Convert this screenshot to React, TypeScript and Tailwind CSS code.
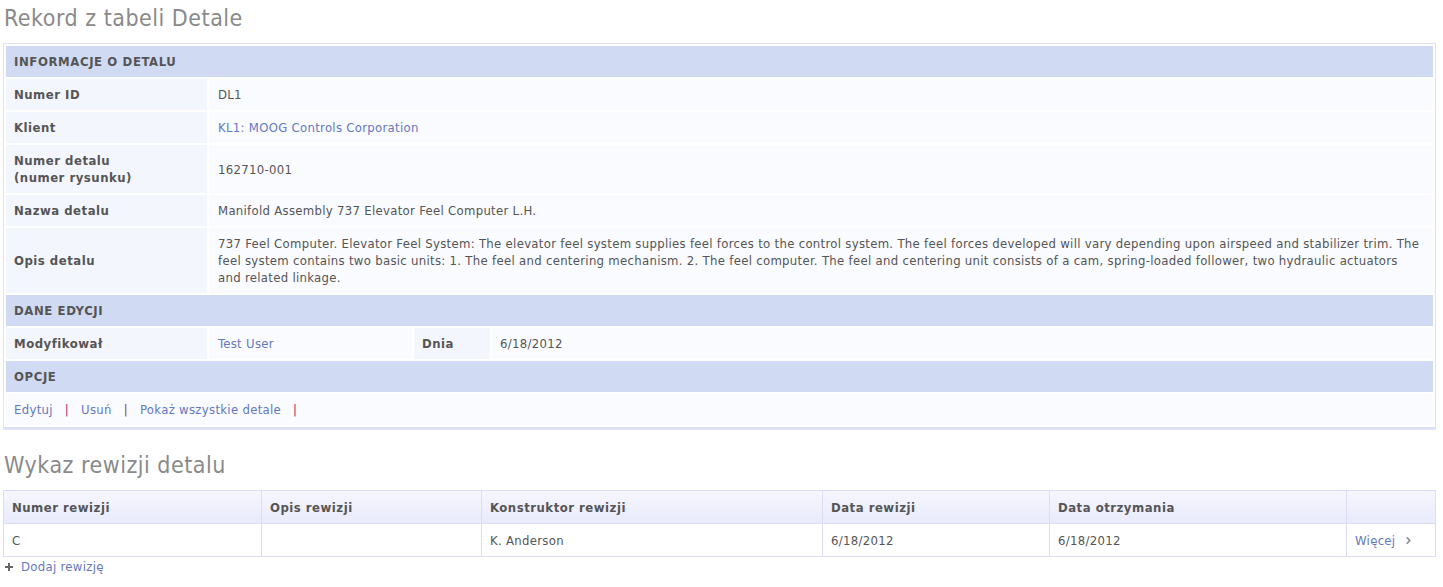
import { ChevronRight } from 'lucide-react';

const font = { fontFamily: '"DejaVu Sans Condensed", "DejaVu Sans", Tahoma, sans-serif' };

function Section({ title }: { title: string }) {
  return (
    <tr>
      <td
        colSpan={4}
        className="h-[31px] bg-[#d0dbf3] px-2 py-[7px] font-bold uppercase tracking-[0.6px] text-[#555]"
      >
        {title}
      </td>
    </tr>
  );
}

function Field({ label, children }: { label: React.ReactNode; children: React.ReactNode }) {
  return (
    <tr>
      <td className="w-[201px] bg-[#f4f6fd] px-2 py-[7px] align-middle font-bold tracking-[0.5px] text-[#555]">
        {label}
      </td>
      <td colSpan={3} className="bg-[#fafbff] py-[7px] pl-[9px] pr-[10px] align-middle text-[#555]">
        {children}
      </td>
    </tr>
  );
}

const link = 'text-[#6478bd] hover:underline cursor-pointer';
const pipe = 'mx-[12px] text-[#a0306a]';
const th = 'border border-[#dcdcf5] px-2 font-bold tracking-[0.5px]';
const td = 'border border-[#dcdcf5] px-2';

export default function App() {
  const revisions = [
    { num: 'C', opis: '', konstruktor: 'K. Anderson', data: '6/18/2012', otrzymania: '6/18/2012' },
  ];

  return (
    <div
      className="min-h-screen bg-white pl-[3px] pr-[7px] text-[13px] leading-[17px] tracking-[0.3px] text-[#555]"
      style={font}
    >
      <h1 className="pl-px pt-[4px] text-[23px] leading-[28px] tracking-[0.5px] text-[#8a8a8a]">
        Rekord z tabeli Detale
      </h1>

      <div className="mt-[11px] border border-b-[3px] border-[#dfe1f5] bg-white">
        <table className="w-full border-separate border-spacing-[2px]">
          <tbody>
            <Section title="Informacje o detalu" />
            <Field label="Numer ID">DL1</Field>
            <Field label="Klient">
              <span className={link}>KL1: MOOG Controls Corporation</span>
            </Field>
            <Field label={<>Numer detalu<br />(numer rysunku)</>}>162710-001</Field>
            <Field label="Nazwa detalu">Manifold Assembly 737 Elevator Feel Computer L.H.</Field>
            <Field label="Opis detalu">
              737 Feel Computer. Elevator Feel System: The elevator feel system supplies feel forces to the control
              system. The feel forces developed will vary depending upon airspeed and stabilizer trim. The feel system
              contains two basic units: 1. The feel and centering mechanism. 2. The feel computer. The feel and
              centering unit consists of a cam, spring-loaded follower, two hydraulic actuators and related linkage.
            </Field>
            <Section title="Dane edycji" />
            <tr>
              <td className="w-[201px] bg-[#f4f6fd] px-2 py-[7px] font-bold tracking-[0.5px]">Modyfikował</td>
              <td className="w-[203px] bg-[#fafbff] py-[7px] pl-[9px]">
                <span className={link}>Test User</span>
              </td>
              <td className="w-[76px] bg-[#f4f6fd] px-2 py-[7px] font-bold tracking-[0.5px]">Dnia</td>
              <td className="bg-[#fafbff] py-[7px] pl-[8px]">6/18/2012</td>
            </tr>
            <Section title="Opcje" />
            <tr>
              <td colSpan={4} className="bg-[#fafbff] px-2 py-[7px]">
                <span className={link}>Edytuj</span>
                <span className={pipe}>|</span>
                <span className={link}>Usuń</span>
                <span className={pipe}>|</span>
                <span className={link}>Pokaż wszystkie detale</span>
                <span className={pipe}>|</span>
              </td>
            </tr>
          </tbody>
        </table>
      </div>

      <h2 className="pl-px pt-[21px] text-[23px] leading-[28px] tracking-[0.5px] text-[#8a8a8a]">
        Wykaz rewizji detalu
      </h2>

      <table className="mt-[11px] w-full border-collapse border border-[#dcdcf5]">
        <thead>
          <tr className="bg-gradient-to-b from-[#f6f6fe] to-[#e9eafb] text-left">
            <th className={`h-[33px] w-[258px] ${th}`}>Numer rewizji</th>
            <th className={`w-[220px] ${th}`}>Opis rewizji</th>
            <th className={`w-[341px] ${th}`}>Konstruktor rewizji</th>
            <th className={`w-[227px] ${th}`}>Data rewizji</th>
            <th className={`w-[297px] ${th}`}>Data otrzymania</th>
            <th className={th}></th>
          </tr>
        </thead>
        <tbody>
          {revisions.map((r) => (
            <tr key={r.num} className="bg-white">
              <td className={`h-[33px] ${td}`}>{r.num}</td>
              <td className={td}>{r.opis}</td>
              <td className={td}>{r.konstruktor}</td>
              <td className={td}>{r.data}</td>
              <td className={td}>{r.otrzymania}</td>
              <td className={td}>
                <span className="inline-flex items-center gap-[8px]">
                  <span className={link}>Więcej</span>
                  <ChevronRight size={11} strokeWidth={3.5} className="text-[#888]" />
                </span>
              </td>
            </tr>
          ))}
        </tbody>
      </table>

      <div className="mt-[1px] flex items-center gap-[8px] pl-[2px]">
        <svg width="8" height="8" viewBox="0 0 8 8" className="text-[#666]">
          <path d="M3 0h2v3h3v2H5v3H3V5H0V3h3z" fill="currentColor" />
        </svg>
        <span className={link}>Dodaj rewizję</span>
      </div>
    </div>
  );
}
